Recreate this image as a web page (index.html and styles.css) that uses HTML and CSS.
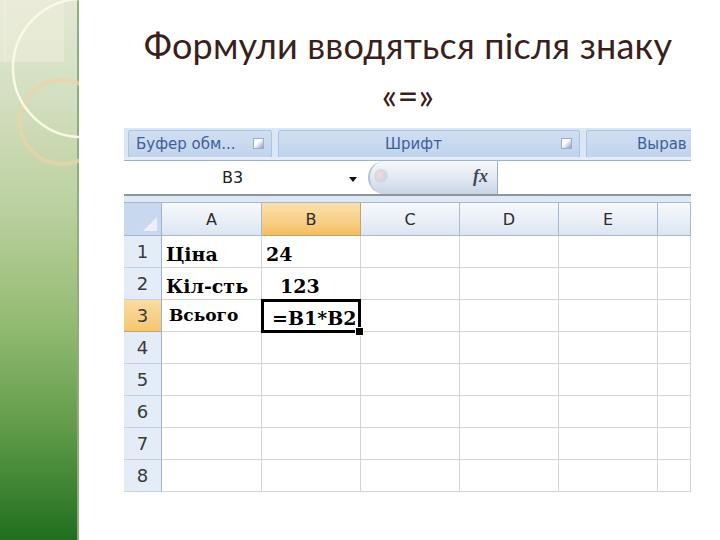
FILE: index.html
```html
<!DOCTYPE html>
<html lang="uk">
<head>
<meta charset="utf-8">
<title>Формули</title>
<link rel="stylesheet" href="styles.css">
</head>
<body>
<aside class="side">
  <svg class="deco" width="79" height="540" viewBox="0 0 79 540">
    <rect x="0" y="0" width="64" height="62" fill="#f4f0e0" opacity="0.45"/>
    <line x1="5" y1="0" x2="5" y2="62" stroke="#ffffff" stroke-width="1" opacity="0.45"/>
    <circle cx="62" cy="122" r="42" fill="none" stroke="#ecd3a8" stroke-width="4" opacity="0.7"/>
    <circle cx="82" cy="68" r="69" fill="none" stroke="#fbfbe6" stroke-width="2.5" opacity="0.95"/>
  </svg>
</aside>
<main class="main">
  <h1 class="title">Формули вводяться після знаку<br>«=»</h1>
  <section class="excel">
    <div class="ribbon">
      <div class="group g1"><span>Буфер обм...</span><i class="launch"></i></div>
      <div class="group g2"><span>Шрифт</span><i class="launch"></i></div>
      <div class="group g3"><span>Вырав</span></div>
    </div>
    <div class="strip"></div>
    <div class="fbar">
      <div class="namebox"><span class="ref">B3</span><span class="arrow"></span></div>
      <div class="fxbtn"><span class="knob"></span><span class="fx">fx</span></div>
      <div class="finput"></div>
    </div>
    <div class="strip2"></div>
    <div class="grid">
      <div class="corner"><span class="tri"></span></div>
      <div class="ch">A</div><div class="ch sel">B</div><div class="ch">C</div><div class="ch">D</div><div class="ch">E</div><div class="ch"></div>

      <div class="rh">1</div><div class="c big">Ціна</div><div class="c big">24</div><div class="c"></div><div class="c"></div><div class="c"></div><div class="c"></div>
      <div class="rh">2</div><div class="c big">Кіл-сть</div><div class="c big ind">123</div><div class="c"></div><div class="c"></div><div class="c"></div><div class="c"></div>
      <div class="rh sel">3</div><div class="c mid">Всього</div><div class="c active"><span class="clip"><span class="formula">=B1*B2</span></span><span class="handle"></span></div><div class="c"></div><div class="c"></div><div class="c"></div><div class="c"></div>
      <div class="rh">4</div><div class="c"></div><div class="c"></div><div class="c"></div><div class="c"></div><div class="c"></div><div class="c"></div>
      <div class="rh">5</div><div class="c"></div><div class="c"></div><div class="c"></div><div class="c"></div><div class="c"></div><div class="c"></div>
      <div class="rh">6</div><div class="c"></div><div class="c"></div><div class="c"></div><div class="c"></div><div class="c"></div><div class="c"></div>
      <div class="rh">7</div><div class="c"></div><div class="c"></div><div class="c"></div><div class="c"></div><div class="c"></div><div class="c"></div>
      <div class="rh">8</div><div class="c"></div><div class="c"></div><div class="c"></div><div class="c"></div><div class="c"></div><div class="c"></div>
    </div>
  </section>
</main>
</body>
</html>
```

FILE: styles.css
```css
html, body {
  margin: 0;
  padding: 0;
}
body {
  width: 720px;
  height: 540px;
  overflow: hidden;
  display: flex;
  background: #ffffff;
  font-family: "Liberation Sans", Arial, sans-serif;
}
.side {
  width: 77px;
  height: 540px;
  flex: none;
  position: relative;
  border-right: 2px solid #8fae7c;
  background: linear-gradient(to bottom, #e2e9d3 0%, #d3dfc0 18%, #b9cf9c 40%, #93bb72 60%, #5e9a47 80%, #206f1f 100%);
}
.deco {
  position: absolute;
  left: 0;
  top: 0;
}
.main {
  flex: 1;
  display: flex;
  flex-direction: column;
  padding-left: 45px;
}
.title {
  margin: 20px 0 8px 0;
  padding-right: 28px;
  font-family: Lato, "Noto Sans", sans-serif;
  font-weight: normal;
  font-size: 36px;
  line-height: 50px;
  color: #3a1f1c;
  text-align: center;
  letter-spacing: 0.2px;
}
.excel {
  width: 567px;
  overflow: hidden;
  background: #dbe6f4;
}
.ribbon {
  display: flex;
  gap: 6px;
  height: 29px;
  padding: 2px 0 0 4px;
  box-sizing: border-box;
  background: #dce7f5;
}
.group {
  flex: none;
  height: 27px;
  box-sizing: border-box;
  border: 1px solid #adc3df;
  border-bottom: none;
  border-radius: 3px 3px 0 0;
  background: linear-gradient(to bottom, #d0def1, #c1d4ed);
  display: flex;
  align-items: center;
  position: relative;
  font-family: "DejaVu Sans", sans-serif;
  font-size: 15px;
  color: #3f5f9b;
}
.g1 { width: 144px; padding-left: 7px; }
.g2 { width: 302px; padding-left: 106px; }
.g3 { width: 120px; padding-left: 50px; }
.launch {
  position: absolute;
  right: 7px;
  top: 7px;
  width: 9px;
  height: 9px;
  border: 1px solid #9aaccc;
  background: linear-gradient(135deg, #ffffff 40%, #8ea0c0 100%);
}
.strip {
  height: 3px;
  background: #e3ecf8;
  border-bottom: 1px solid #9db2cf;
}
.fbar {
  display: flex;
  height: 33px;
  background: #ffffff;
  border-bottom: 2px solid #8e959e;
}
.namebox {
  width: 238px;
  display: flex;
  align-items: center;
  position: relative;
  font-family: "DejaVu Sans", sans-serif;
  font-size: 16px;
  color: #222;
}
.ref {
  margin-left: 98px;
}
.arrow {
  position: absolute;
  left: 225px;
  top: 16px;
  width: 0;
  height: 0;
  border-left: 4px solid transparent;
  border-right: 4px solid transparent;
  border-top: 5px solid #111;
}
.fxbtn {
  margin-left: 6px;
  width: 130px;
  position: relative;
  border-radius: 17px 0 0 17px;
  background: linear-gradient(to bottom, #f6f8fb 0%, #e3e9f2 50%, #c8d5e6 100%);
  border-left: 2px solid #b4c0cf;
  border-right: 1px solid #9aaecb;
  box-sizing: border-box;
}
.knob {
  position: absolute;
  left: 4px;
  top: 8px;
  width: 14px;
  height: 14px;
  border-radius: 50%;
  background: radial-gradient(circle at 40% 40%, #f3d9dd 0%, #cfd6e0 60%, #e7ecf2 100%);
}
.fx {
  position: absolute;
  left: 103px;
  top: 5px;
  font-family: "Liberation Serif", serif;
  font-style: italic;
  font-weight: bold;
  font-size: 18px;
  color: #3e4a5c;
}
.finput {
  flex: 1;
  background: #ffffff;
}
.strip2 {
  height: 6px;
  background: #dfe8f5;
  border-bottom: 1px solid #a6b7cc;
}
.grid {
  display: grid;
  grid-template-columns: 38px 100px 99px 99px 99px 99px 33px;
  grid-template-rows: 33px repeat(8, 32px);
  background: #ffffff;
  padding-bottom: 5px;
}
.corner {
  background: #c8d8ee;
  border-right: 1px solid #9eb3cf;
  border-bottom: 1px solid #9eb3cf;
  position: relative;
}
.tri {
  position: absolute;
  right: 4px;
  bottom: 4px;
  width: 0;
  height: 0;
  border-left: 14px solid transparent;
  border-bottom: 14px solid #e9f0fa;
}
.ch {
  background: linear-gradient(to bottom, #f6f8fc 0%, #e8eef7 60%, #dbe4f1 100%);
  border-right: 1px solid #a8bad2;
  border-bottom: 1px solid #a8bad2;
  display: flex;
  align-items: center;
  justify-content: center;
  font-family: "DejaVu Sans", sans-serif;
  font-size: 16px;
  color: #2b2b2b;
}
.ch.sel {
  background: linear-gradient(to bottom, #fbe0ab 0%, #f8cf85 60%, #f3bd5e 100%);
  border-right-color: #c6a168;
  border-bottom-color: #c6a168;
}
.rh {
  background: #e4ecf7;
  border-right: 1px solid #9eb3cf;
  border-bottom: 1px solid #c4d0e0;
  display: flex;
  align-items: center;
  justify-content: center;
  font-family: "DejaVu Sans", sans-serif;
  font-size: 18px;
  color: #3a3a3a;
}
.rh.sel {
  background: linear-gradient(to bottom, #fbdca3, #f5c66f);
  border-bottom-color: #c6a168;
}
.c {
  border-right: 1px solid #d4d4d4;
  border-bottom: 1px solid #d4d4d4;
  position: relative;
  font-family: "DejaVu Serif", "Liberation Serif", serif;
  font-weight: bold;
  color: #000;
  white-space: nowrap;
  box-sizing: border-box;
}
.big {
  font-size: 19px;
  padding: 7px 0 0 4px;
  line-height: 22px;
}
.ind {
  padding-left: 18px;
}
.mid {
  font-size: 17px;
  padding: 5px 0 0 7px;
  line-height: 20px;
}
.active {
  border: 3px solid #000;
  margin: -1px 0 -1px -1px;
  z-index: 1;
}
.clip {
  position: absolute;
  left: 0;
  top: 0;
  right: 0;
  bottom: 0;
  overflow: hidden;
}
.formula {
  position: absolute;
  left: 8px;
  top: 5px;
  font-size: 19px;
  line-height: 23px;
}
.handle {
  position: absolute;
  right: -6px;
  bottom: -6px;
  width: 7px;
  height: 7px;
  background: #000;
  border: 1px solid #fff;
}
```
